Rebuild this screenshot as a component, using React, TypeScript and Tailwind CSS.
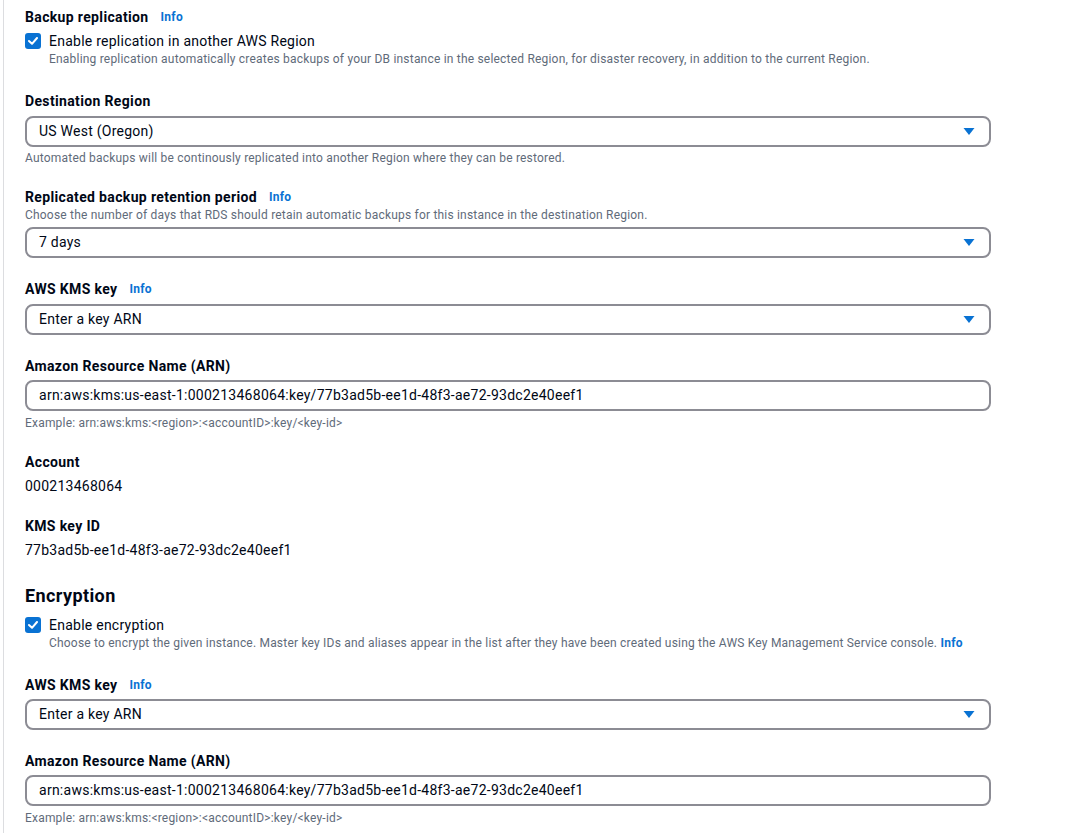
import React from "react";

const font = { fontFamily: "Roboto, 'Noto Sans', sans-serif" };

function Info({ className = "" }: { className?: string }) {
  return <span className={"text-[12px] font-bold tracking-[0.3px] text-[#0972d3] " + className}>Info</span>;
}

function Label({ text, info }: { text: string; info?: boolean }) {
  return (
    <div className="flex items-center h-[20px] text-[14px] font-bold tracking-[0.35px] text-[#000716]">
      <span>{text}</span>
      {info && <Info className="ml-[12px]" />}
    </div>
  );
}

function Select({ value }: { value: string }) {
  return (
    <div className="flex items-center justify-between h-[31px] w-[966px] rounded-[8px] border-2 border-[#8c8c94] pl-[12px] pr-[14px] text-[14px] tracking-[0.25px] text-[#000716]">
      <span>{value}</span>
      <svg width="12" height="9" viewBox="0 0 12 9">
        <path d="M0.5 1 L11.5 1 L6 8 Z" fill="#0972d3" />
      </svg>
    </div>
  );
}

function Input({ value }: { value: string }) {
  return (
    <div className="flex items-center h-[31px] w-[966px] rounded-[8px] border-2 border-[#8c8c94] pl-[12px] text-[14px] tracking-[0.26px] text-[#000716]">
      <span>{value}</span>
    </div>
  );
}

function Desc({ children, className = "" }: { children: React.ReactNode; className?: string }) {
  return <div className={"text-[12px] leading-[16px] tracking-[0.2px] text-[#5f6b7a] " + className}>{children}</div>;
}

function Check({ label, desc }: { label: React.ReactNode; desc: React.ReactNode }) {
  return (
    <div className="flex gap-[8px]">
      <div className="mt-[2px] w-[16px] h-[16px] rounded-[3px] bg-[#0972d3] flex items-center justify-center shrink-0">
        <svg width="10" height="8" viewBox="0 0 10 8">
          <path d="M1 4 L4 6.8 L9 1" stroke="white" strokeWidth="2" fill="none" strokeLinecap="round" strokeLinejoin="round" />
        </svg>
      </div>
      <div>
        <div className="text-[14px] leading-[20px] tracking-[0.25px] text-[#000716]">{label}</div>
        <Desc>{desc}</Desc>
      </div>
    </div>
  );
}

const ARN = "arn:aws:kms:us-east-1:000213468064:key/77b3ad5b-ee1d-48f3-ae72-93dc2e40eef1";
const EX = "Example: arn:aws:kms:<region>:<accountID>:key/<key-id>";

export default function App() {
  return (
    <div style={font} className="w-[1082px] h-[833px] bg-white overflow-hidden flex">
      <div className="w-[3px] shrink-0" />
      <div className="w-[1px] bg-[#dcdde0] shrink-0" />
      <div className="pl-[21px] pt-[7px] flex flex-col">
        <Label text="Backup replication" info />
        <div className="mt-[4px]">
          <Check
            label="Enable replication in another AWS Region"
            desc="Enabling replication automatically creates backups of your DB instance in the selected Region, for disaster recovery, in addition to the current Region."
          />
        </div>
        <div className="mt-[24px]"><Label text="Destination Region" /></div>
        <div className="mt-[5px]"><Select value="US West (Oregon)" /></div>
        <Desc className="mt-[3px]">
          Automated backups will be continously replicated into another Region where they can be restored.
        </Desc>
        <div className="mt-[21px]"><Label text="Replicated backup retention period" info /></div>
        <Desc>
          Choose the number of days that RDS should retain automatic backups for this instance in the destination Region.
        </Desc>
        <div className="mt-[4px]"><Select value="7 days" /></div>
        <div className="mt-[21px]"><Label text="AWS KMS key" info /></div>
        <div className="mt-[5px]"><Select value="Enter a key ARN" /></div>
        <div className="mt-[21px]"><Label text="Amazon Resource Name (ARN)" /></div>
        <div className="mt-[4px]"><Input value={ARN} /></div>
        <Desc className="mt-[4px]">{EX}</Desc>
        <div className="mt-[21px]"><Label text="Account" /></div>
        <div className="mt-[4px] text-[14px] leading-[20px] tracking-[0.25px] text-[#000716]">000213468064</div>
        <div className="mt-[20px]"><Label text="KMS key ID" /></div>
        <div className="mt-[4px] text-[14px] leading-[20px] tracking-[0.25px] text-[#000716]">77b3ad5b-ee1d-48f3-ae72-93dc2e40eef1</div>
        <div className="mt-[24px] text-[18px] leading-[24px] font-bold tracking-[0.4px] text-[#000716]">Encryption</div>
        <div className="mt-[7px]">
          <Check
            label="Enable encryption"
            desc={
              <>
                Choose to encrypt the given instance. Master key IDs and aliases appear in the list after they have been created using the AWS Key Management Service console. <Info />
              </>
            }
          />
        </div>
        <div className="mt-[24px]"><Label text="AWS KMS key" info /></div>
        <div className="mt-[4px]"><Select value="Enter a key ARN" /></div>
        <div className="mt-[21px]"><Label text="Amazon Resource Name (ARN)" /></div>
        <div className="mt-[4px]"><Input value={ARN} /></div>
        <Desc className="mt-[4px]">{EX}</Desc>
      </div>
    </div>
  );
}
